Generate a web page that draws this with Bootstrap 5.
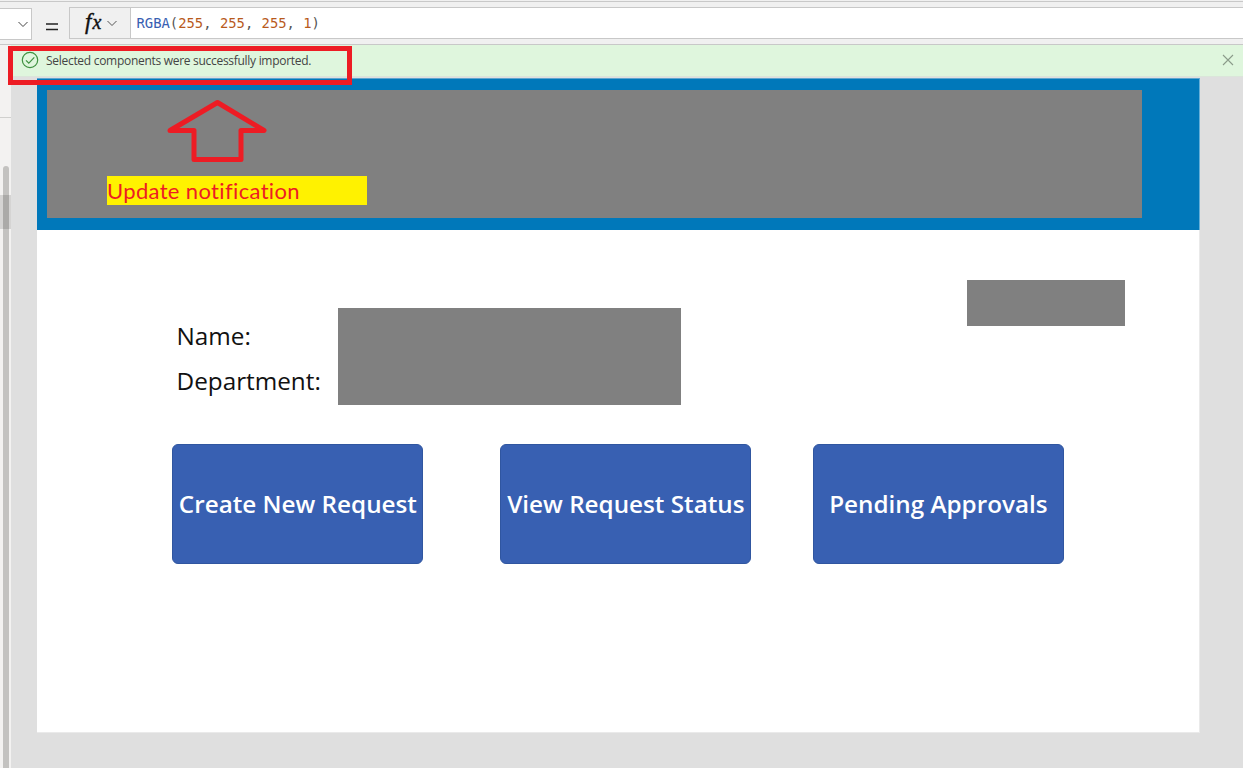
<!DOCTYPE html>
<html lang="en">
<head>
<meta charset="utf-8">
<meta name="viewport" content="width=device-width, initial-scale=1">
<title>App editor</title>
<link href="https://cdn.jsdelivr.net/npm/bootstrap@5.3.0/dist/css/bootstrap.min.css" rel="stylesheet">
<style>
  body { height: 768px; background: #dfdfdf; font-family: "Open Sans", "Noto Sans", sans-serif; color: #111; }
  .top-rule { height: 2px; background: #f0f0f0; border-bottom: 1px solid #c8c8c8; }
  .formula-bar { height: 43px; padding-top: 5px; background: #f0f0f0; border-bottom: 1px solid #c8c8c8; }
  .prop-select { width: 32px; height: 32px; margin-top: 1px; padding-right: 3px; background: #fff; border: 1px solid #c8c8c8; border-left: 0; }
  .equals { width: 37px; padding: 16px 0 0 14px; }
  .equals svg, .prop-select svg, .fx svg { display: block; }
  .fx { width: 62px; height: 32px; border: 1px solid #c8c8c8; background: #f0f0f0; }
  .fx-label { font: italic 400 20px/28px "Liberation Serif", serif; width: 22px; margin-left: 15px; padding-bottom: 3px; color: #111; -webkit-text-stroke: .4px #111; }
  .fx-label span { font-size: 23px; margin-right: 1px; }
  .formula { height: 32px; padding-left: 5.5px; background: #fff; border: solid #c8c8c8; border-width: 1px 0; font: 13.85px/30px "DejaVu Sans Mono", monospace; color: #555; white-space: pre; }
  .fn { color: #3860b2; }
  .num { color: #b85a1c; }
  .side { width: 11px; background: #f3f2f1; }
  .side-top { height: 73px; border-bottom: 1px solid #d0d0ce; }
  .side-scroll { width: 6px; height: 602px; margin: 48px 0 0 3px; background: #c3c2c0; border-radius: 3px 3px 0 0; }
  .side-selected { top: 150px; left: 0; width: 11px; height: 34px; background: rgba(0,0,0,.12); }
  .notice { height: 32px; padding: 0 9px 0 10px; background: #dff6dd; border-bottom: 1px solid #dbe5da; font-size: 12px; line-height: 32px; color: #444; }
  .notice svg { position: relative; top: -.5px; }
  .notice-text { margin-left: 7px; letter-spacing: -.29px; }
  .notice-frame { left: 8px; top: 46px; width: 344px; height: 39px; border: 5px solid #ed1c24; z-index: 3; }
  .screen { width: 1163px; height: 655px; margin: 1px 0 0 26px; background: #fff; border: solid #eaeaea; border-width: 0 1px 1px 0; }
  .banner { height: 152px; margin-right: -1px; padding: 12px 0 0 10px; background: #0078ba; border-top: 1px solid #5ea5cd; border-right: 1px solid #65afd8; }
  .masked { background: #808080; }
  .banner-mask { width: 1095px; height: 128px; margin-top: -1px; padding-left: 60px; }
  .arrow { display: block; margin: 8px 0 0 59px; }
  .callout-note { width: 260px; height: 29px; margin-top: 14px; background: #fff200; color: #ed1c24; font: 22px/30px Lato, sans-serif; letter-spacing: .35px; white-space: nowrap; }
  .details { height: 214px; padding: 50px 74px 0 139.5px; }
  .field-names { width: 161.5px; padding-top: 33px; font-size: 24.3px; line-height: 45px; }
  .field-mask { width: 343px; height: 97px; margin-top: 28px; }
  .user-mask { width: 158px; height: 46px; }
  .actions { padding-left: 135.4px; }
  .action-btn { width: 251px; height: 120px; padding: 0; border: 1px solid #3056a0; border-radius: 6px; background: #3860b2; color: #fff; font-size: 24.25px; font-weight: 600; line-height: 36px; white-space: nowrap; }
  .action-btn.second { margin-left: 77px; }
  .action-btn.third { margin-left: 61.5px; }
</style>
</head>
<body class="overflow-hidden position-relative">
<div class="top-rule"></div>
<header class="formula-bar d-flex align-items-start">
  <div class="prop-select d-flex align-items-center justify-content-end">
    <svg width="10" height="7" viewBox="0 0 10 7" fill="none" stroke="#444"><path d="M.5 1 5 5.5 9.500 1"/></svg>
  </div>
  <div class="equals"><svg width="12" height="9" viewBox="0 0 12 9"><path d="M0 1h12M0 6.500h12" stroke="#222" stroke-width="1.6"/></svg></div>
  <div class="fx d-flex align-items-center">
    <div class="fx-label"><span>f</span>x</div>
    <svg width="10" height="7" viewBox="0 0 10 7" fill="none" stroke="#555"><path d="M.5 1 5 5.500 9.500 1"/></svg>
  </div>
  <div class="formula flex-grow-1"><span class="fn">RGBA</span>(<span class="num">255</span>, <span class="num">255</span>, <span class="num">255</span>, <span class="num">1</span>)</div>
</header>
<div class="d-flex">
  <aside class="side flex-shrink-0 position-relative">
    <div class="side-top"></div>
    <div class="side-scroll"></div>
    <div class="side-selected position-absolute"></div>
  </aside>
  <main class="flex-grow-1">
    <div class="notice d-flex align-items-center">
      <svg width="18" height="18" viewBox="0 0 18 18" fill="none" stroke="#3f9140" stroke-width="1.2"><circle cx="9" cy="9" r="7.700"/><path d="m5 9.300 2.800 2.800L13.300 6.400"/></svg>
      <span class="notice-text">Selected components were successfully imported.</span>
      <svg class="ms-auto" width="12" height="12" viewBox="0 0 12 12" stroke="#8b9b8a" stroke-width="1.1"><path d="m1 1 10 10M11 1 1 11"/></svg>
    </div>
    <section class="screen">
      <div class="banner">
        <div class="banner-mask masked d-flex flex-column">
          <svg class="arrow" width="102" height="64" viewBox="0 0 102 64" fill="none" stroke="#ed1c24" stroke-width="5" stroke-linejoin="round"><path d="M51.500 4.500 98 32.500H75V61.500H28V32.500H4Z"/></svg>
          <div class="callout-note">Update notification</div>
        </div>
      </div>
      <div class="details d-flex align-items-start">
        <div class="field-names"><div>Name:</div><div>Department:</div></div>
        <div class="field-mask masked"></div>
        <div class="user-mask masked ms-auto"></div>
      </div>
      <div class="actions d-flex">
        <button class="btn action-btn">Create New Request</button>
        <button class="btn action-btn second">View Request Status</button>
        <button class="btn action-btn third">Pending Approvals</button>
      </div>
    </section>
  </main>
</div>
<div class="notice-frame position-absolute"></div>
<script src="https://cdn.jsdelivr.net/npm/bootstrap@5.3.0/dist/js/bootstrap.bundle.min.js"></script>
</body>
</html>
